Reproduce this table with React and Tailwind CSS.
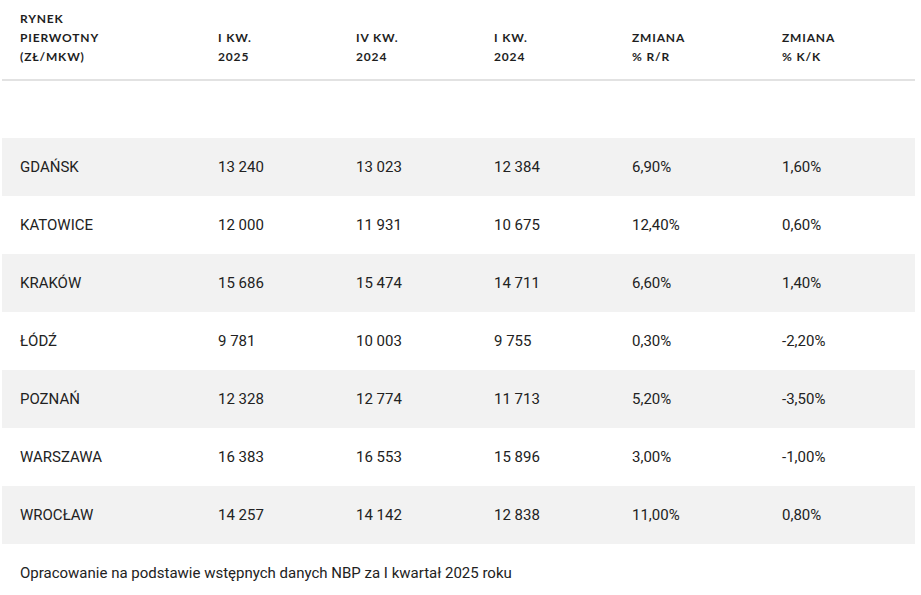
import React from "react";

const rows = [
  ["GDAŃSK", "13 240", "13 023", "12 384", "6,90%", "1,60%"],
  ["KATOWICE", "12 000", "11 931", "10 675", "12,40%", "0,60%"],
  ["KRAKÓW", "15 686", "15 474", "14 711", "6,60%", "1,40%"],
  ["ŁÓDŹ", "9 781", "10 003", "9 755", "0,30%", "-2,20%"],
  ["POZNAŃ", "12 328", "12 774", "11 713", "5,20%", "-3,50%"],
  ["WARSZAWA", "16 383", "16 553", "15 896", "3,00%", "-1,00%"],
  ["WROCŁAW", "14 257", "14 142", "12 838", "11,00%", "0,80%"],
];

const headers = [
  ["RYNEK", "PIERWOTNY", "(ZŁ/MKW)"],
  ["I KW.", "2025"],
  ["IV KW.", "2024"],
  ["I KW.", "2024"],
  ["ZMIANA", "% R/R"],
  ["ZMIANA", "% K/K"],
];

const widths = ["w-[198px]", "w-[138px]", "w-[138px]", "w-[138px]", "w-[150px]", ""];

export default function App() {
  return (
    <div className="bg-white w-[921px] h-[595px] pl-[2px] pr-[6px] text-[#222]" style={{ fontFamily: "Roboto, sans-serif" }}>
      <table className="w-[913px] border-collapse table-fixed">
        <thead>
          <tr className="border-b-2 border-[#e2e2e2]">
            {headers.map((h, i) => (
              <th
                key={i}
                className={`${widths[i]} pl-[18px] pt-[9px] pb-[13px] text-left align-bottom font-bold text-[12px] leading-[19px] tracking-[0.07em] text-[#1e1e1e]`}
                style={{ fontFamily: "Lato, 'DejaVu Sans', sans-serif" }}
              >
                {h.map((line) => (
                  <div key={line}>{line}</div>
                ))}
              </th>
            ))}
          </tr>
        </thead>
        <tbody>
          <tr className="h-[58px]">
            <td colSpan={6}></td>
          </tr>
          {rows.map((r, i) => (
            <tr key={r[0]} className={i % 2 === 0 ? "h-[58px] bg-[#f2f2f2]" : "h-[58px] bg-white"}>
              {r.map((c, j) => (
                <td key={j} className="pl-[18px] text-[15px] leading-5 align-middle">
                  {c}
                </td>
              ))}
            </tr>
          ))}
        </tbody>
      </table>
      <p className="pl-[18px] pt-[19px] text-[15px] leading-5">
        Opracowanie na podstawie wstępnych danych NBP za I kwartał 2025 roku
      </p>
    </div>
  );
}
